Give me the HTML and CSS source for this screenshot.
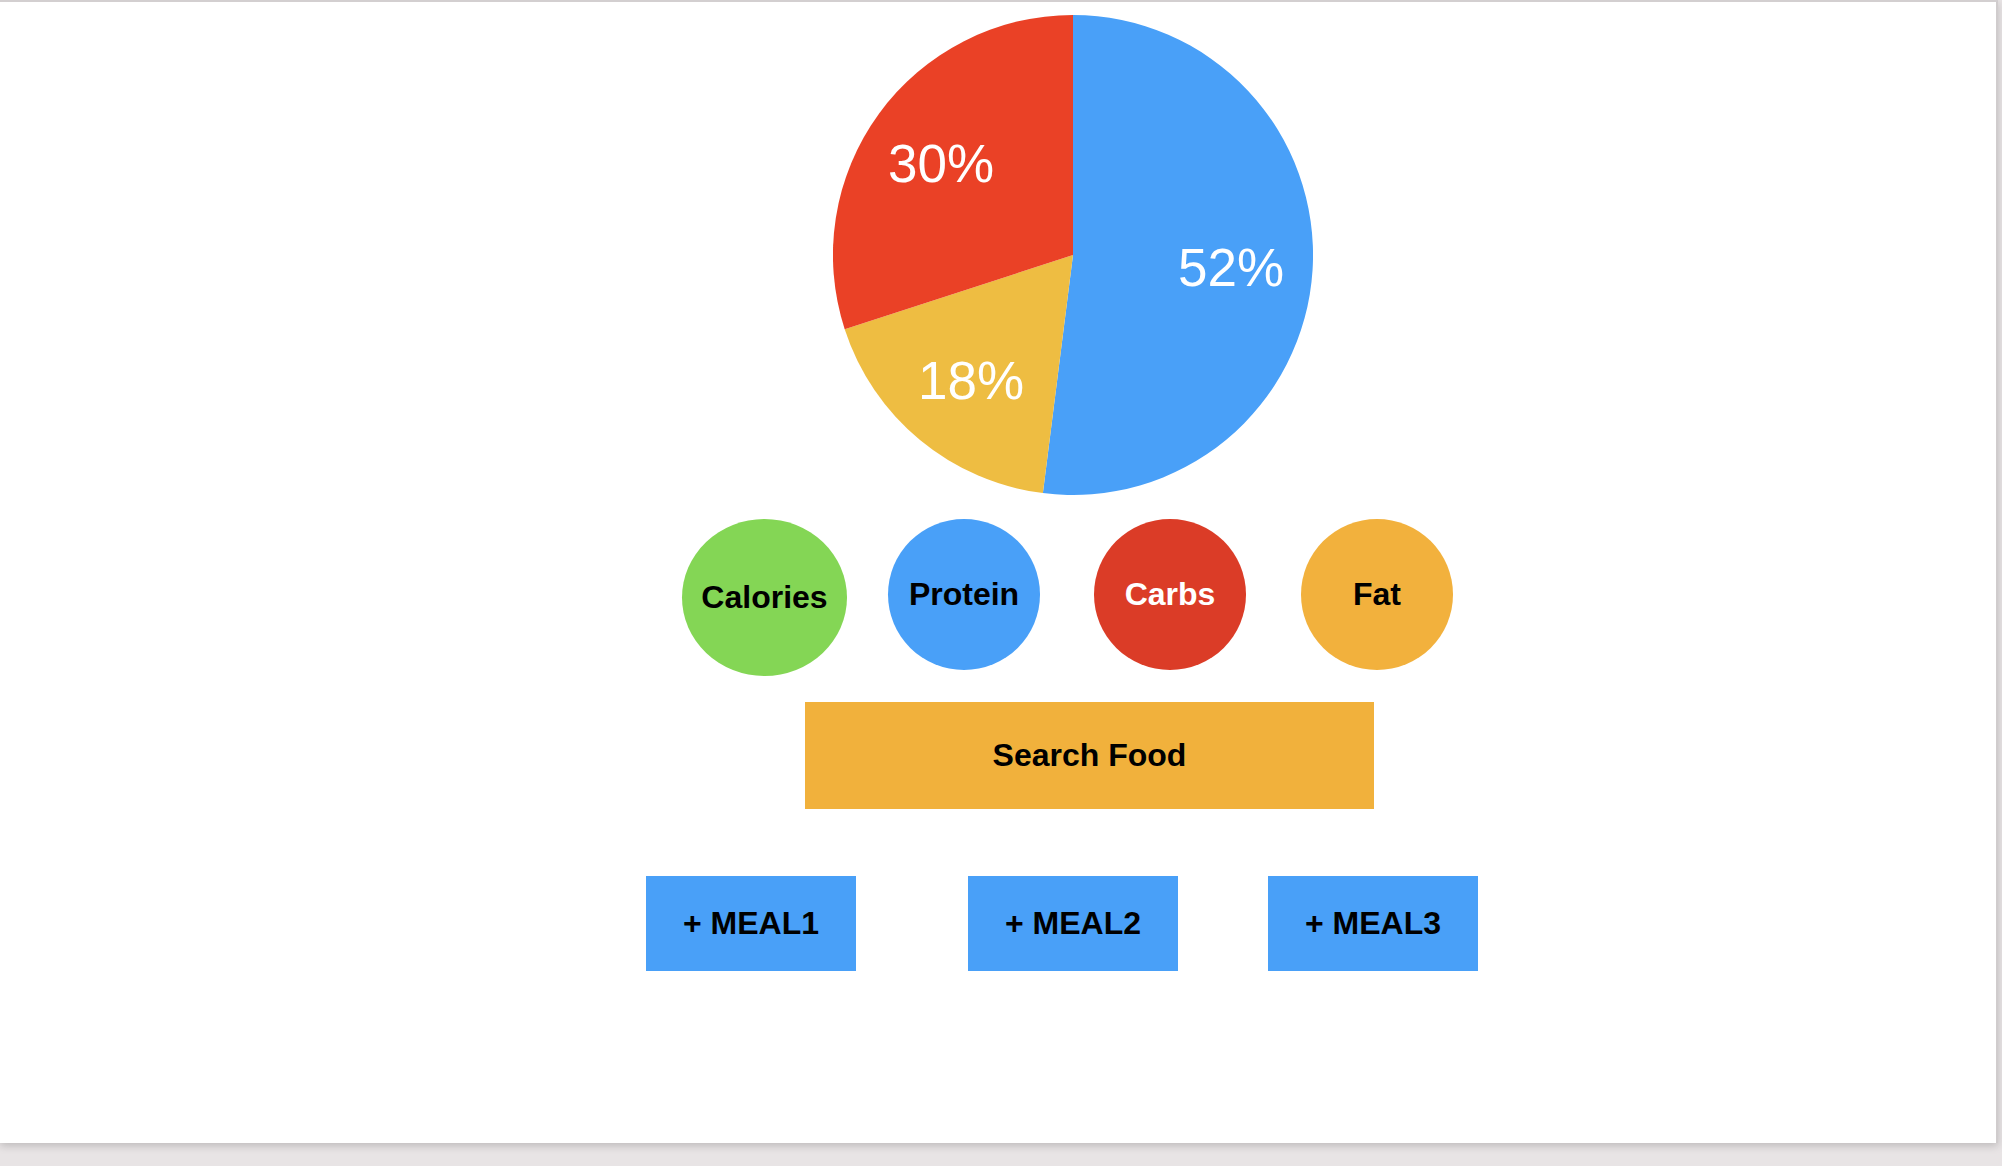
FILE: index.html
```html
<!DOCTYPE html>
<html lang="en">
<head>
    <meta name="viewport" content="width=device-width, initial-scale=1.0">
    <title>Macro Tracker</title>
    <link rel="stylesheet" href="styles.css">
</head>
<body>
    <div class="page">
        <svg class="pie" width="480" height="480" viewBox="0 0 480 480">
            <path d="M240,240 L240,0 A240,240 0 1,1 209.9,478.1 Z" fill="#49a0f8"/>
            <path d="M240,240 L209.9,478.1 A240,240 0 0,1 11.7,314.2 Z" fill="#eebd42"/>
            <path d="M240,240 L11.7,314.2 A240,240 0 0,1 240,0 Z" fill="#ea4126"/>
            <text x="55" y="167" class="pie-label">30%</text>
            <text x="345" y="271" class="pie-label">52%</text>
            <text x="85" y="384" class="pie-label">18%</text>
        </svg>

        <div class="macros">
            <div class="macro calories">Calories</div>
            <div class="macro protein">Protein</div>
            <div class="macro carbs">Carbs</div>
            <div class="macro fat">Fat</div>
        </div>

        <button class="search-btn">Search Food</button>

        <div class="meals">
            <button class="meal-btn">+ MEAL1</button>
            <button class="meal-btn meal2">+ MEAL2</button>
            <button class="meal-btn meal3">+ MEAL3</button>
        </div>
    </div>
</body>
</html>
```

FILE: styles.css
```css
body {
    margin: 0;
    height: 1166px;
    overflow: hidden;
    background-color: #e8e4e5;
    font-family: 'Liberation Sans', Arial, sans-serif;
}

.page {
    width: 1996px;
    height: 1141px;
    background-color: #fff;
    border-top: 2px solid #d3cfd0;
    border-right: 2px solid #d0cccd;
    box-shadow: 0 3px 8px rgba(0, 0, 0, 0.18);
    padding-top: 13px;
    box-sizing: content-box;
    height: 1128px;
}

.pie {
    display: block;
    margin-left: 833px;
}

.pie-label {
    fill: #fff;
    font-family: 'Liberation Sans', Arial, sans-serif;
    font-size: 53px;
}

.macros {
    display: flex;
    align-items: flex-start;
    margin-top: 24px;
    padding-left: 682px;
}

.macro {
    width: 152px;
    height: 151px;
    border-radius: 50%;
    display: flex;
    align-items: center;
    justify-content: center;
    font-size: 32px;
    font-weight: bold;
    color: #000;
    margin-left: 54px;
}

.calories {
    width: 165px;
    height: 157px;
    margin-left: 0;
    background-color: #84d655;
}

.protein {
    margin-left: 41px;
    background-color: #49a0f8;
}

.carbs {
    background-color: #db3c27;
    color: #fff;
}

.fat {
    margin-left: 55px;
    background-color: #f2b13d;
}

button {
    border: none;
    padding: 0;
    font-family: 'Liberation Sans', Arial, sans-serif;
    font-size: 32px;
    font-weight: bold;
    color: #000;
    cursor: pointer;
}

.search-btn {
    display: block;
    width: 569px;
    height: 107px;
    margin-top: 26px;
    margin-left: 805px;
    background-color: #f1b13c;
}

.meals {
    display: flex;
    margin-top: 67px;
    padding-left: 646px;
}

.meal-btn {
    width: 210px;
    height: 95px;
    background-color: #49a0f8;
}

.meal2 {
    margin-left: 112px;
}

.meal3 {
    margin-left: 90px;
}
```
